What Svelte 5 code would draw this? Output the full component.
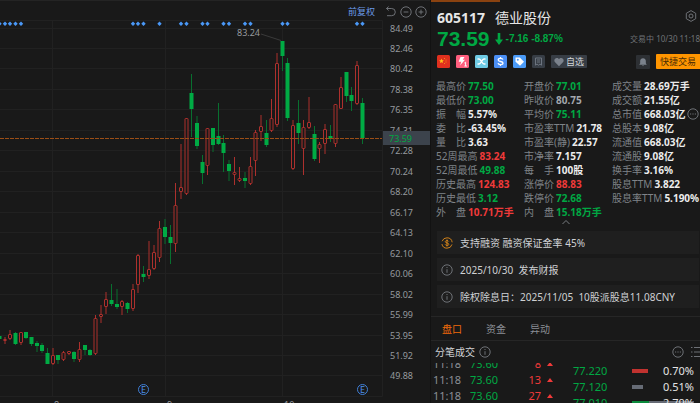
<script lang="ts">
  // body top, body bottom, wick top, wick bottom, up?
  const candles: [number, number, number, number, 0 | 1][] = [
    [336, 339, 336, 339, 0], [339, 341, 337, 344, 1], [334, 339, 330, 340, 1], [333, 344, 332, 345, 0],
    [332, 343, 332, 345, 1], [332, 338, 332, 339, 0], [337, 344, 337, 346, 0], [343, 346, 341, 352, 0],
    [345, 351, 343, 353, 0], [353, 364, 348, 364, 0], [355, 364, 348, 365, 1], [355, 360, 355, 364, 0],
    [352, 360, 351, 361, 1], [351, 354, 351, 355, 1], [352, 359, 351, 362, 0], [349, 360, 342, 362, 1],
    [345, 350, 345, 355, 0], [350, 355, 349, 356, 0], [318, 354, 315, 355, 1], [314, 317, 305, 323, 1],
    [299, 307, 292, 314, 1], [300, 304, 284, 306, 0], [304, 307, 289, 309, 0], [301, 307, 300, 315, 1],
    [303, 309, 302, 313, 0], [289, 309, 284, 311, 1], [255, 285, 254, 293, 1], [274, 277, 266, 282, 0],
    [269, 276, 241, 279, 1], [252, 269, 245, 270, 1], [228, 258, 221, 262, 1], [227, 237, 219, 244, 0],
    [237, 243, 225, 264, 0], [205, 244, 183, 252, 1], [187, 192, 144, 199, 1], [118, 194, 118, 195, 1],
    [93, 109, 74, 137, 0], [123, 146, 116, 149, 0], [162, 173, 155, 184, 0], [128, 166, 128, 175, 1],
    [128, 145, 128, 152, 0], [136, 144, 103, 145, 0], [143, 153, 135, 172, 0], [164, 171, 160, 181, 0],
    [172, 175, 157, 185, 1], [178, 181, 167, 182, 1], [178, 181, 172, 188, 0], [166, 184, 157, 185, 1],
    [132, 161, 130, 176, 1], [126, 132, 115, 141, 1], [133, 145, 120, 147, 0], [118, 131, 99, 132, 1],
    [63, 125, 53, 127, 1], [41, 56, 41, 71, 0], [63, 118, 58, 121, 0], [125, 169, 120, 170, 1],
    [123, 133, 100, 144, 0], [127, 149, 120, 175, 1], [122, 128, 97, 129, 1], [134, 159, 126, 161, 0],
    [144, 149, 142, 163, 1], [129, 144, 124, 154, 1], [136, 139, 125, 142, 0], [104, 144, 104, 147, 1],
    [87, 109, 77, 109, 1], [72, 96, 72, 102, 0], [95, 101, 87, 111, 0], [65, 104, 61, 105, 1],
    [103, 138, 98, 144, 0],
  ];
  const events = [0, 1, 2, 3, 4, 25, 26, 27, 30, 34, 35, 38, 39, 42, 43, 46, 47, 53, 54, 67, 68];
  const prices = [
    '84.49', '82.46', '80.42', '78.38', '76.35', '74.31', '72.28', '70.24', '68.20',
    '66.17', '64.13', '62.10', '60.06', '58.02', '55.99', '53.95', '51.92', '49.88',
  ];
  const months = [
    { x: 52, label: '8' },
    { x: 165, label: '9' },
    { x: 282, label: '10' },
  ];

  const cx = (i: number) => Math.round((i * 5.336 - 0.5) * 2) / 2;
  const priceY = (i: number) => Math.round(28.5 + i * 20.47);

  const stats = [
    [
      ['最高价', '77.50', 'green'], ['最低价', '73.00', 'green'], ['振　幅', '5.57%', ''],
      ['委　比', '-63.45%', ''], ['量　比', '3.63', ''], ['52周最高', '83.24', 'red'],
      ['52周最低', '49.88', 'green'], ['历史最高', '124.83', 'red'], ['历史最低', '3.12', 'green'],
      ['外　盘', '10.71万手', 'red'],
    ],
    [
      ['开盘价', '77.01', 'green'], ['昨收价', '80.75', 'flat'], ['平均价', '75.11', 'green'],
      ['市盈率TTM', '21.78', ''], ['市盈率(静)', '22.57', ''], ['市净率', '7.157', ''],
      ['每　手', '100股', ''], ['涨停价', '88.83', 'red'], ['跌停价', '72.68', 'green'],
      ['内　盘', '15.18万手', 'green'],
    ],
    [
      ['成交量', '28.69万手', ''], ['成交额', '21.55亿', ''], ['总市值', '668.03亿', ''],
      ['总股本', '9.08亿', ''], ['流通值', '668.03亿', ''], ['流通股', '9.08亿', ''],
      ['换手率', '3.16%', ''], ['股息TTM', '3.822', ''], ['股息率TTM', '5.190%', ''],
    ],
  ];

  const notices = [
    '支持融资 融资保证金率 45%',
    '2025/10/30  发布财报',
    '除权除息日：2025/11/05  10股派股息11.08CNY',
  ];

  const tabs = ['盘口', '资金', '异动'];
  let tab = $state('盘口');

  const ticks = [
    { time: '11:18', price: '73.60', volume: 8 },
    { time: '11:18', price: '73.60', volume: 13 },
    { time: '11:18', price: '73.60', volume: 27 },
  ];
  const levels = [
    { price: '77.220', red: 16, green: 0, grey: 0, share: '0.70%' },
    { price: '77.120', red: 0, green: 0, grey: 11, share: '0.51%' },
    { price: '77.010', red: 0, green: 17, grey: 45, share: '2.79%' },
  ];
</script>

{#snippet info()}
  <svg class="round" viewBox="0 0 12 12">
    <circle cx="6" cy="6" r="5.2" />
    <path d="M6 5.2v3.6M6 3v1" />
  </svg>
{/snippet}

{#snippet more()}
  <svg class="round" viewBox="0 0 12 12">
    <circle cx="6" cy="6" r="5.2" />
    <path d="M3 6h1.2M5.4 6h1.2M7.8 6H9" />
  </svg>
{/snippet}

<main>
  <section class="chart">
    <div class="toolbar">
      <button class="adjust">前复权</button>
      <button aria-label="撤销">
        <svg class="round" viewBox="0 0 12 12">
          <path d="M1.5 2.5h5.2a3.6 3.6 0 0 1 0 7.2H2M3.6 .6 1.5 2.5l2.1 2" />
        </svg>
      </button>
      <button aria-label="缩小">
        <svg class="round" viewBox="0 0 12 12"><circle cx="6" cy="6" r="5.2" /><path d="M3.6 6h4.8" /></svg>
      </button>
      <button aria-label="放大">
        <svg class="round" viewBox="0 0 12 12"><circle cx="6" cy="6" r="5.2" /><path d="M3.6 6h4.8M6 3.6v4.8" /></svg>
      </button>
    </div>

    <svg class="plot" viewBox="0 20 430 383">
      <g class="grid">
        <path d="M0 20.5H382.5V396.5H0" />
        {#each prices as price, i (price)}
          <path d="M0 {priceY(i) - 0.5}H382" />
        {/each}
        {#each months as { x } (x)}
          <path d="M{x + 0.5} 20V396" />
        {/each}
      </g>

      {#each candles as [top, bottom, high, low, up], i}
        {#if up}
          <g class="up">
            <path d="M{cx(i)} {high}V{top}M{cx(i)} {bottom}V{low}" />
            <rect x={cx(i) - 1.5} y={top + 0.5} width="3" height={bottom - top - 1} rx="0.5" />
          </g>
        {:else}
          <g class="down">
            <path d="M{cx(i)} {high}V{low}" />
            <rect x={cx(i) - 2} y={top} width="4" height={bottom - top} />
          </g>
        {/if}
      {/each}

      {#each events as i (i)}
        <path class="event" d="M{cx(i)} 21.5l2.2 2.2-2.2 2.2-2.2-2.2z" />
      {/each}

      <path class="pointer" d="M261 34l20 6.5" />
      <text class="peak" x="237" y="36">83.24</text>

      {#each [143.5, 362.5] as x (x)}
        <g class="report">
          <circle cx={x} cy="389.5" r="5" />
          <text {x} y="393">E</text>
        </g>
      {/each}

      {#each prices as price, i (price)}
        <text class="price" x="390" y={priceY(i) + 3}>{price}</text>
      {/each}
      {#each months as { x, label } (x)}
        <text class="price" x={x + 2} y="408">{label}</text>
      {/each}

      <path class="now-line" d="M0 138.5H382" />
      <rect class="now-tag" x="383" y="131" width="47" height="14" />
      <text class="now" x="389" y="142">73.59</text>
    </svg>
  </section>

  <aside>
    <header>
      <div class="title">
        <b>605117</b>
        <h1>德业股份</h1>
        <button class="gear" aria-label="设置">
          <svg class="round" viewBox="0 0 12 12">
            <path d="M6 .6 10.7 3.3v5.4L6 11.4 1.3 8.7V3.3z" />
            <circle cx="6" cy="6" r="2" />
          </svg>
        </button>
      </div>

      <div class="quote">
        <strong>73.59</strong>
        <svg class="arrow" viewBox="0 0 8 12"><path d="M2.7 0h2.6v6.5H8L4 12 0 6.5h2.7z" /></svg>
        <span class="change">-7.16 -8.87%</span>
        <time>交易中 10/30 11:18</time>
      </div>

      <div class="badges">
        <svg viewBox="0 0 13 13">
          <rect width="13" height="13" rx="1.5" fill="#e0301e" />
          <path d="M4.5 3.6l.7 1.6 1.7.1-1.3 1.1.4 1.7-1.5-.9-1.5.9.4-1.7-1.3-1.1 1.7-.1z" fill="#ffc21a" />
          <path d="M7 3.5h1M8.5 5h1M8.5 7h1M7 8.5h1" stroke="#f08a1a" />
        </svg>
        <svg viewBox="0 0 13 13">
          <rect width="13" height="13" rx="1.5" fill="#ff5f7e" />
          <path d="M4.5 2h4L6.8 4.8H9L4 10.500l1.300-3.800H2.700z" fill="#fff" />
          <path d="M8.4 8l1.2-.8V11M8.4 11h2.6" fill="none" stroke="#fff" />
        </svg>
        <svg viewBox="0 0 13 13">
          <rect width="13" height="13" rx="1.5" fill="#6fcbe4" />
          <path d="M2.500 4H4c2.200 0 2.800 5 5 5h1.500M2.500 9H4c2.200 0 2.800-5 5-5h1.500" fill="none" stroke="#fff" stroke-width="1.4" />
        </svg>
        <svg viewBox="0 0 13 13">
          <rect width="13" height="13" rx="1.5" fill="#4b8ff5" />
          <path d="M9 4.600C8.600 3.600 7.600 3.400 6.500 3.400c-1.400 0-2.300.6-2.300 1.500 0 2.200 4.800 1 4.800 3.200 0 1-1 1.600-2.400 1.600-1.300 0-2.300-.4-2.600-1.500M6.500 2v1.400M6.500 9.700V11" fill="none" stroke="#fff" stroke-width="1.3" />
        </svg>
        <svg viewBox="0 0 13 13">
          <rect width="13" height="13" rx="1.5" fill="#4b9bf8" />
          <path d="M2.500 2.500h4.300L11 6.700 7 10.800 2.500 6.800z" fill="#fff" />
          <circle cx="4.800" cy="4.800" r="1" fill="#4b9bf8" />
        </svg>
        <svg viewBox="0 0 13 13">
          <rect width="13" height="13" rx="1.5" fill="#373d45" />
          <path d="M3.500 3h6v7.200L8 9l-1.500 1.200L5 9l-1.500 1.200zM5 5h3M5 7h3" fill="none" stroke="#6c747f" />
        </svg>
        <button class="watch">
          <svg viewBox="0 0 12 12"><path d="M6 11 1.300 6.400C-.8 4 1.200 1.300 3.400 1.300c1.200 0 2 .6 2.600 1.500.6-.9 1.400-1.500 2.600-1.500 2.200 0 4.200 2.700 2.100 5.100z" /></svg>
          自选
        </button>
        <button class="bell" aria-label="提醒">
          <svg viewBox="0 0 12 12"><path d="M6 1.500c2.400 0 3.400 1.700 3.400 3.600v2.400l1.100 1.700h-9l1.100-1.700V5.100C2.600 3.200 3.600 1.500 6 1.500zM4.800 9.800h2.400L6 11z" /></svg>
        </button>
        <button class="trade">快捷交易</button>
      </div>
    </header>

    <div class="stats">
      {#each stats as column}
        <dl>
          {#each column as [label, value, tone] (label)}
            <div>
              <dt>{label}</dt>
              <dd class={tone}>{value}</dd>
              {#if label === '总市值'}{@render more()}{/if}
            </div>
          {/each}
        </dl>
      {/each}
    </div>
    <button class="fold" aria-label="收起">
      <svg viewBox="0 0 10 6"><path d="M1.5 5 5 1.500 8.500 5" /></svg>
    </button>

    <ul class="notices">
      {#each notices as notice, i (notice)}
        <li>
          {#if i === 0}
            <svg class="round coin" viewBox="0 0 12 12">
              <circle cx="6" cy="6" r="5.2" stroke-dasharray="13.3 3" stroke-dashoffset="-1.5" />
              <path d="M7.700 4.500C7.400 3.800 6.800 3.600 6 3.600c-1 0-1.700.4-1.700 1.100C4.300 6.400 7.800 5.500 7.800 7.300c0 .7-.7 1.100-1.800 1.100-.9 0-1.600-.3-1.800-1M6 2.500v7" />
            </svg>
          {:else}
            {@render info()}
          {/if}
          <span>{notice}</span>
        </li>
      {/each}
    </ul>

    <nav>
      {#each tabs as name (name)}
        <button class:active={tab === name} onclick={() => (tab = name)}>{name}</button>
      {/each}
    </nav>

    <div class="ticks-head">
      <h2>分笔成交</h2>
      {@render info()}
      <button class="right" aria-label="更多">{@render more()}</button>
      <button aria-label="列表">
        <svg class="round" viewBox="0 0 12 12"><path d="M3 1.500h1.500M3 6h1.500M3 10.500h1.500M6 1.500h6M6 6h6M6 10.500h6" /></svg>
      </button>
    </div>

    <div class="trades">
      <table class="ticks">
        <tbody>
          {#each ticks as { time, price, volume }}
            <tr>
              <td class="time">{time}</td>
              <td class="green">{price}</td>
              <td class="red volume">{volume}</td>
              <td class="mark"><svg viewBox="0 0 6 4"><path d="M0 4 3 0l3 4z" /></svg></td>
            </tr>
          {/each}
        </tbody>
      </table>
      <table class="levels">
        <tbody>
          {#each levels as { price, red, green, grey, share } (price)}
            <tr>
              <td class="green level">{price}</td>
              <td class="depth">
                <div class="bar">
                  <i class="bar-red" style="width: {red}px"></i>
                  <i class="bar-green" style="width: {green}px"></i>
                  <i class="bar-grey" style="width: {grey}px"></i>
                </div>
              </td>
              <td class="share">{share}</td>
            </tr>
          {/each}
        </tbody>
      </table>
    </div>
  </aside>
</main>

<style>
  :global(body) {
    background: #191919;
  }
  main {
    display: grid;
    grid-template-columns: minmax(0, 43fr) minmax(0, 27fr);
    height: 100vh;
    overflow: hidden;
    background: #191919;
    color: #8b8f96;
    font-family: "Noto Sans", "Noto Sans CJK SC", sans-serif;
    font-size: 9px;
    line-height: 14px;
  }
  h1,
  h2,
  dl,
  dd,
  ul {
    margin: 0;
    padding: 0;
  }
  button {
    display: flex;
    align-items: center;
    padding: 0;
    border: 0;
    background: none;
    color: inherit;
    font: inherit;
    white-space: nowrap;
    cursor: pointer;
  }
  svg {
    display: block;
    flex-shrink: 0;
  }
  .green {
    color: #00a843;
  }
  .red {
    color: #f03a3a;
  }
  .round {
    width: 12px;
    height: 12px;
    fill: none;
    stroke: #777b80;
    stroke-width: 0.9;
  }

  .chart {
    min-width: 0;
  }
  .toolbar {
    box-sizing: border-box;
    display: flex;
    justify-content: flex-end;
    align-items: center;
    gap: 3px;
    height: 20px;
    padding: 2px 3px 0 0;
    border-top: 1px solid #242424;
  }
  .adjust {
    margin-right: 7px;
    color: #6a9ae8;
  }
  .plot {
    width: 100%;
    height: auto;
  }
  .grid path {
    fill: none;
    stroke: #212121;
  }
  .up path,
  .up rect {
    fill: none;
    stroke: #ad302d;
  }
  .up rect {
    fill: #191919;
  }
  .down path {
    stroke: #08702f;
  }
  .down rect {
    fill: #00ab44;
  }
  .event {
    fill: #4a98f7;
  }
  .pointer {
    stroke: #3a3a3a;
  }
  .peak,
  .price {
    fill: #96999e;
    font-size: 9px;
  }
  .report circle {
    fill: none;
    stroke: #3f7fd6;
  }
  .report text {
    fill: #4d8fe8;
    font-size: 9px;
    text-anchor: middle;
  }
  .now-line {
    stroke: #9c4e16;
    stroke-dasharray: 4 1;
  }
  .now-tag {
    fill: #3c434c;
  }
  .now {
    fill: #00a843;
    font-size: 9px;
  }

  aside {
    display: flex;
    flex-direction: column;
    min-width: 0;
    overflow: hidden;
    border-left: 1px solid #121212;
  }
  header {
    padding: 8px 0 0 6px;
    position: relative;
  }
  header::before {
    content: "";
    position: absolute;
    top: 0;
    left: 0;
    width: 69px;
    height: 2px;
    background: #8a4210;
  }
  .title {
    display: flex;
    align-items: center;
    gap: 10px;
    height: 20px;
    color: #e6e6e6;
    font-size: 14px;
  }
  h1 {
    font-size: 14px;
    font-weight: 400;
  }
  .gear {
    margin: 0 3px 4px auto;
  }
  .quote {
    display: flex;
    align-items: center;
    height: 22px;
    color: #00a843;
    font-family: "Liberation Sans", "Noto Sans CJK SC", sans-serif;
    white-space: nowrap;
  }
  .quote strong {
    font-size: 21px;
  }
  .arrow {
    width: 8px;
    height: 12px;
    margin: 0 3px 0 5px;
    fill: #00a843;
  }
  .change {
    font-size: 10px;
    font-weight: 700;
  }
  time {
    margin-left: auto;
    color: #6f7276;
    font-family: "Noto Sans", "Noto Sans CJK SC", sans-serif;
    font-size: 8px;
  }
  .badges {
    display: flex;
    align-items: center;
    gap: 6px;
    height: 15px;
    margin-top: 4px;
  }
  .badges > svg {
    width: 13px;
    height: 13px;
  }
  .watch {
    gap: 2px;
    height: 13px;
    padding: 0 3px;
    border-radius: 1px;
    background: #373d45;
    color: #d4d6d9;
  }
  .watch svg,
  .bell svg {
    width: 10px;
    height: 10px;
    fill: #7b828c;
  }
  .bell {
    justify-content: center;
    width: 14px;
    height: 14px;
    margin-left: auto;
    border-radius: 1px;
    background: #2d3034;
  }
  .trade {
    height: 15px;
    padding: 0 4px;
    border-radius: 1px 0 0 1px;
    background: #ff9500;
    color: #4a2c04;
  }

  .stats {
    display: grid;
    grid-template-columns: repeat(3, minmax(0, 1fr));
    padding: 10px 0 0 5px;
    font-size: 10px;
    white-space: nowrap;
  }
  .stats dl > div {
    display: flex;
    align-items: center;
    gap: 2px;
    height: 14px;
  }
  dt {
    color: #7f8388;
  }
  dd {
    color: #ececec;
    font-weight: 700;
  }
  dd.green {
    color: #00a843;
  }
  dd.red {
    color: #f03a3a;
  }
  dd.flat {
    color: #a4a8ae;
  }
  .fold {
    align-self: center;
    height: 6px;
  }
  .fold svg {
    width: 10px;
    height: 6px;
    fill: none;
    stroke: #777b80;
  }

  .notices {
    display: flex;
    flex-direction: column;
    gap: 4px;
    margin: 6px 1px 8px 6px;
    list-style: none;
  }
  li {
    display: flex;
    align-items: center;
    gap: 7px;
    height: 23px;
    padding-left: 4px;
    background: #1f1f1f;
    color: #cfd1d4;
    font-size: 10px;
    white-space: pre;
  }
  .coin {
    stroke: #e08a1a;
  }

  nav {
    display: flex;
    gap: 24px;
    height: 23px;
    padding-left: 11px;
    border-top: 1px solid #262626;
    border-bottom: 1px solid #262626;
    font-size: 10px;
  }
  nav .active {
    color: #f06a0a;
  }
  .ticks-head {
    display: flex;
    align-items: center;
    gap: 4px;
    height: 22px;
    padding-left: 4px;
    color: #d0d2d5;
  }
  h2 {
    font-size: 10px;
    font-weight: 400;
  }
  .right {
    margin-left: auto;
  }

  .trades {
    display: grid;
    grid-template-columns: 142px minmax(0, 1fr);
    flex: 1;
    min-height: 0;
    overflow: hidden;
    font-size: 11px;
    line-height: 16px;
  }
  table {
    border-collapse: collapse;
    table-layout: fixed;
  }
  td {
    height: 16px;
    padding: 0;
  }
  .ticks {
    width: 120px;
    height: 48px;
    margin: -7px 0 0 2px;
  }
  .time {
    width: 37px;
  }
  .volume {
    text-align: right;
  }
  .mark {
    width: 12px;
  }
  .mark svg {
    width: 6px;
    height: 4px;
    margin-left: auto;
    fill: #f03a3a;
  }
  .levels {
    width: 121px;
    height: 48px;
  }
  .level {
    width: 59px;
  }
  .depth {
    width: 24px;
  }
  .bar {
    display: flex;
    height: 4px;
  }
  .bar i {
    flex-shrink: 0;
  }
  .bar-red {
    background: #c0322f;
  }
  .bar-green {
    background: #0b8a3c;
  }
  .bar-grey {
    background: #666b75;
  }
  .share {
    color: #e4e4e4;
    text-align: right;
  }
</style>
